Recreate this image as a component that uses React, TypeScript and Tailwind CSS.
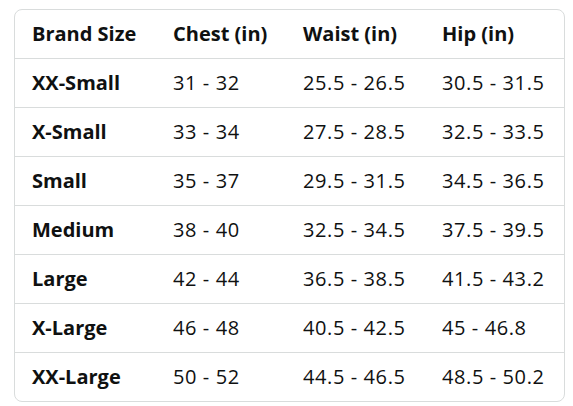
const rows = [
  ["XX-Small", "31 - 32", "25.5 - 26.5", "30.5 - 31.5"],
  ["X-Small", "33 - 34", "27.5 - 28.5", "32.5 - 33.5"],
  ["Small", "35 - 37", "29.5 - 31.5", "34.5 - 36.5"],
  ["Medium", "38 - 40", "32.5 - 34.5", "37.5 - 39.5"],
  ["Large", "42 - 44", "36.5 - 38.5", "41.5 - 43.2"],
  ["X-Large", "46 - 48", "40.5 - 42.5", "45 - 46.8"],
  ["XX-Large", "50 - 52", "44.5 - 46.5", "48.5 - 50.2"],
];

const headers = ["Brand Size", "Chest (in)", "Waist (in)", "Hip (in)"];

export default function App() {
  return (
    <div className="min-h-screen bg-white pt-[9px] pl-[14px]" style={{ fontFamily: '"Open Sans", "Noto Sans", sans-serif' }}>
      <div className="w-[551px] overflow-hidden rounded-lg border border-[#d9dcdc] text-[#0f1111]">
        <div className="grid grid-cols-[141px_130px_139px_140px]">
          {headers.map((h) => (
            <div key={h} className="flex h-[49px] items-center border-b border-[#d9dcdc] pl-[17px] text-[20px] font-bold">
              {h}
            </div>
          ))}
          {rows.map((row, i) =>
            row.map((cell, j) => {
              const last = i === rows.length - 1;
              const base = last
                ? "flex h-[48px] items-center pl-[17px] text-[20px]"
                : "flex h-[49px] items-center border-b border-[#d9dcdc] pl-[17px] text-[20px]";
              return (
                <div key={i + "-" + j} className={base + (j === 0 ? " font-bold" : " tracking-[0.6px]")}>
                  {cell}
                </div>
              );
            })
          )}
        </div>
      </div>
    </div>
  );
}
